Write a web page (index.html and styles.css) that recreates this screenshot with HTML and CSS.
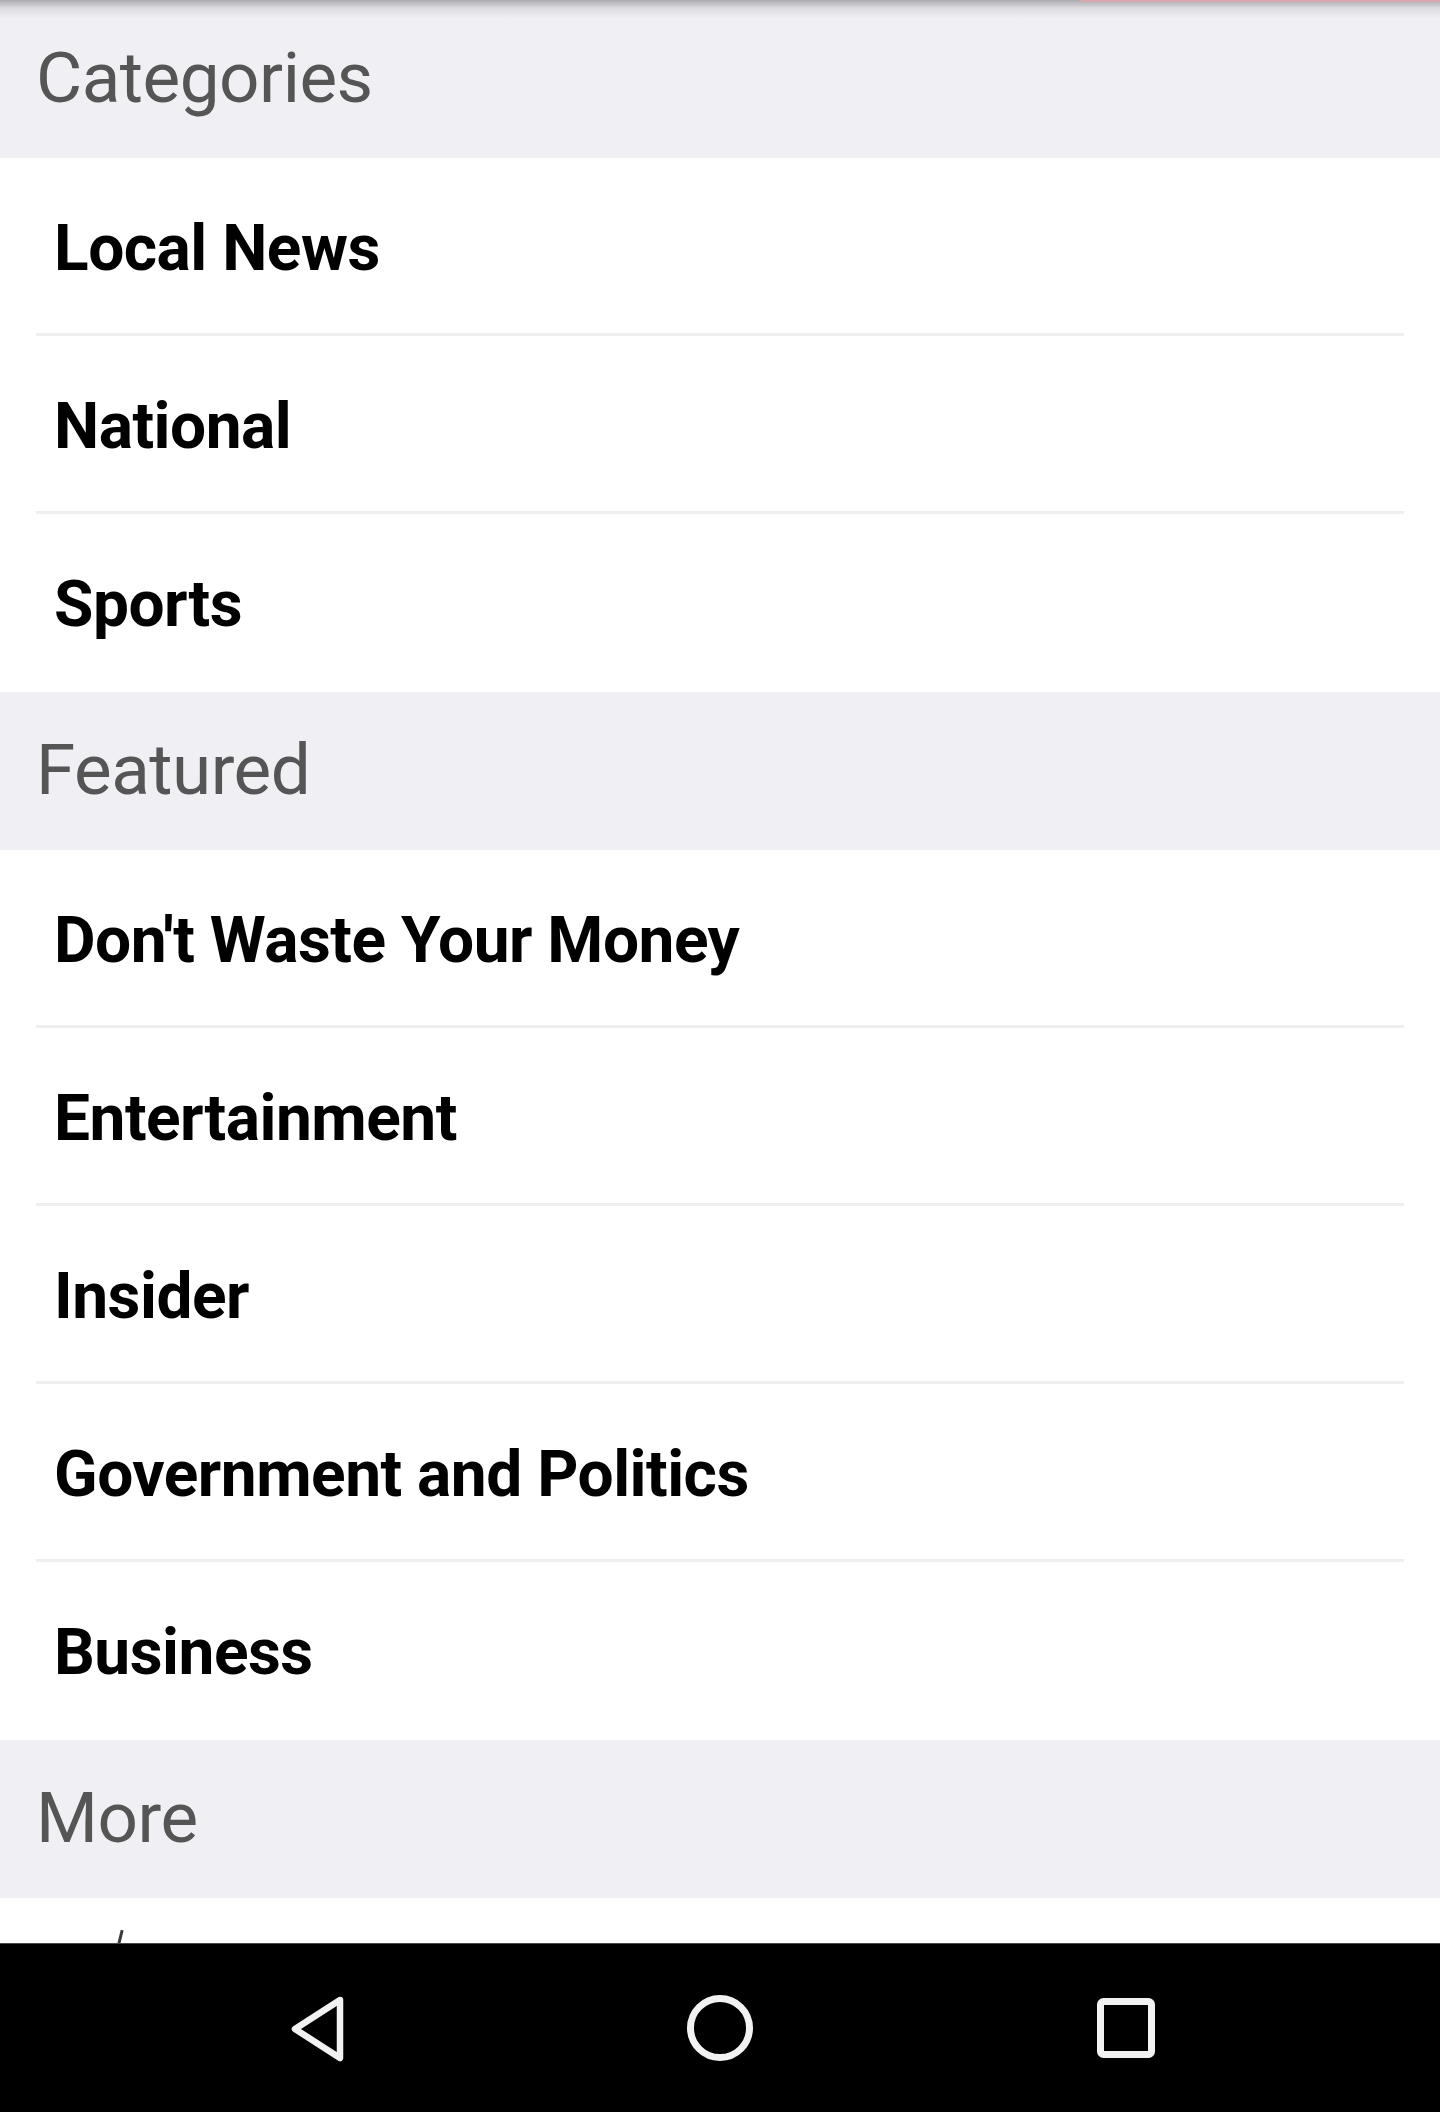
FILE: index.html
```html
<!DOCTYPE html>
<html lang="en">
<head>
<meta charset="utf-8">
<title>Sections</title>
<link rel="stylesheet" href="styles.css">
</head>
<body>
<div class="screen">
  <div class="list">
    <div class="top-shadow"></div>
    <div class="top-accent"></div>

    <div class="section-header">Categories</div>
    <div class="item"><div class="item-inner">Local News</div></div>
    <div class="item"><div class="item-inner">National</div></div>
    <div class="item"><div class="item-inner">Sports</div></div>

    <div class="section-header">Featured</div>
    <div class="item"><div class="item-inner">Don't Waste Your Money</div></div>
    <div class="item"><div class="item-inner">Entertainment</div></div>
    <div class="item"><div class="item-inner">Insider</div></div>
    <div class="item"><div class="item-inner">Government and Politics</div></div>
    <div class="item"><div class="item-inner">Business</div></div>

    <div class="section-header">More</div>
    <div class="item partial"><span class="tick"></span></div>
  </div>

  <nav class="navbar">
    <svg class="nav-icon" width="80" height="80" viewBox="0 0 80 80">
      <path d="M64 12 L19 41 L64 70 Z" fill="none" stroke="#f2f2f2" stroke-width="6.5" stroke-linejoin="round"/>
    </svg>
    <svg class="nav-icon" width="80" height="80" viewBox="0 0 80 80">
      <circle cx="40" cy="40" r="29.5" fill="none" stroke="#f2f2f2" stroke-width="7"/>
    </svg>
    <svg class="nav-icon" width="80" height="80" viewBox="0 0 80 80">
      <rect x="16.5" y="13.5" width="51" height="53" rx="3" fill="none" stroke="#f2f2f2" stroke-width="7"/>
    </svg>
  </nav>
</div>
</body>
</html>
```

FILE: styles.css
```css
html, body {
  margin: 0;
  padding: 0;
  background: #ffffff;
}

.screen {
  width: 1440px;
  height: 2112px;
  display: flex;
  flex-direction: column;
  overflow: hidden;
  font-family: Roboto, "Liberation Sans", Arial, sans-serif;
}

.list {
  position: relative;
  flex: 1;
  overflow: hidden;
  background: #ffffff;
}

.top-shadow {
  position: absolute;
  top: 0;
  left: 0;
  right: 0;
  height: 18px;
  background: linear-gradient(to bottom, rgba(140,140,146,0.7), rgba(180,180,186,0.35) 45%, rgba(239,239,244,0));
}

.top-accent {
  position: absolute;
  top: 0;
  left: 1080px;
  right: 0;
  height: 2px;
  background: #d7a6ad;
}

.section-header {
  height: 158px;
  box-sizing: border-box;
  padding: 36px 0 0 36px;
  background: #efeff4;
  color: #555555;
  font-size: 71px;
  font-weight: 400;
  line-height: 83px;
  letter-spacing: -0.5px;
}

.item {
  padding: 0 36px;
  background: #ffffff;
}

.item-inner {
  height: 178px;
  box-sizing: border-box;
  padding: 53px 0 0 18px;
  border-bottom: 3px solid #efefef;
  color: #000000;
  font-size: 64px;
  font-weight: 700;
  line-height: 75px;
  letter-spacing: -0.5px;
  white-space: nowrap;
}

.item:last-of-type .item-inner,
.item:has(+ .section-header) .item-inner {
  border-bottom: none;
}

.item.partial {
  position: relative;
  height: 45px;
}

.tick {
  position: absolute;
  left: 119px;
  top: 32px;
  width: 3px;
  height: 14px;
  background: #3a3a3a;
  transform: rotate(14deg);
}

.navbar {
  height: 169px;
  box-sizing: border-box;
  background: #000000;
  border-top: 1px solid #4a4a4a;
  display: flex;
  justify-content: center;
  align-items: flex-start;
  gap: 324px;
  padding-top: 44px;
}

.nav-icon {
  display: block;
}
```
